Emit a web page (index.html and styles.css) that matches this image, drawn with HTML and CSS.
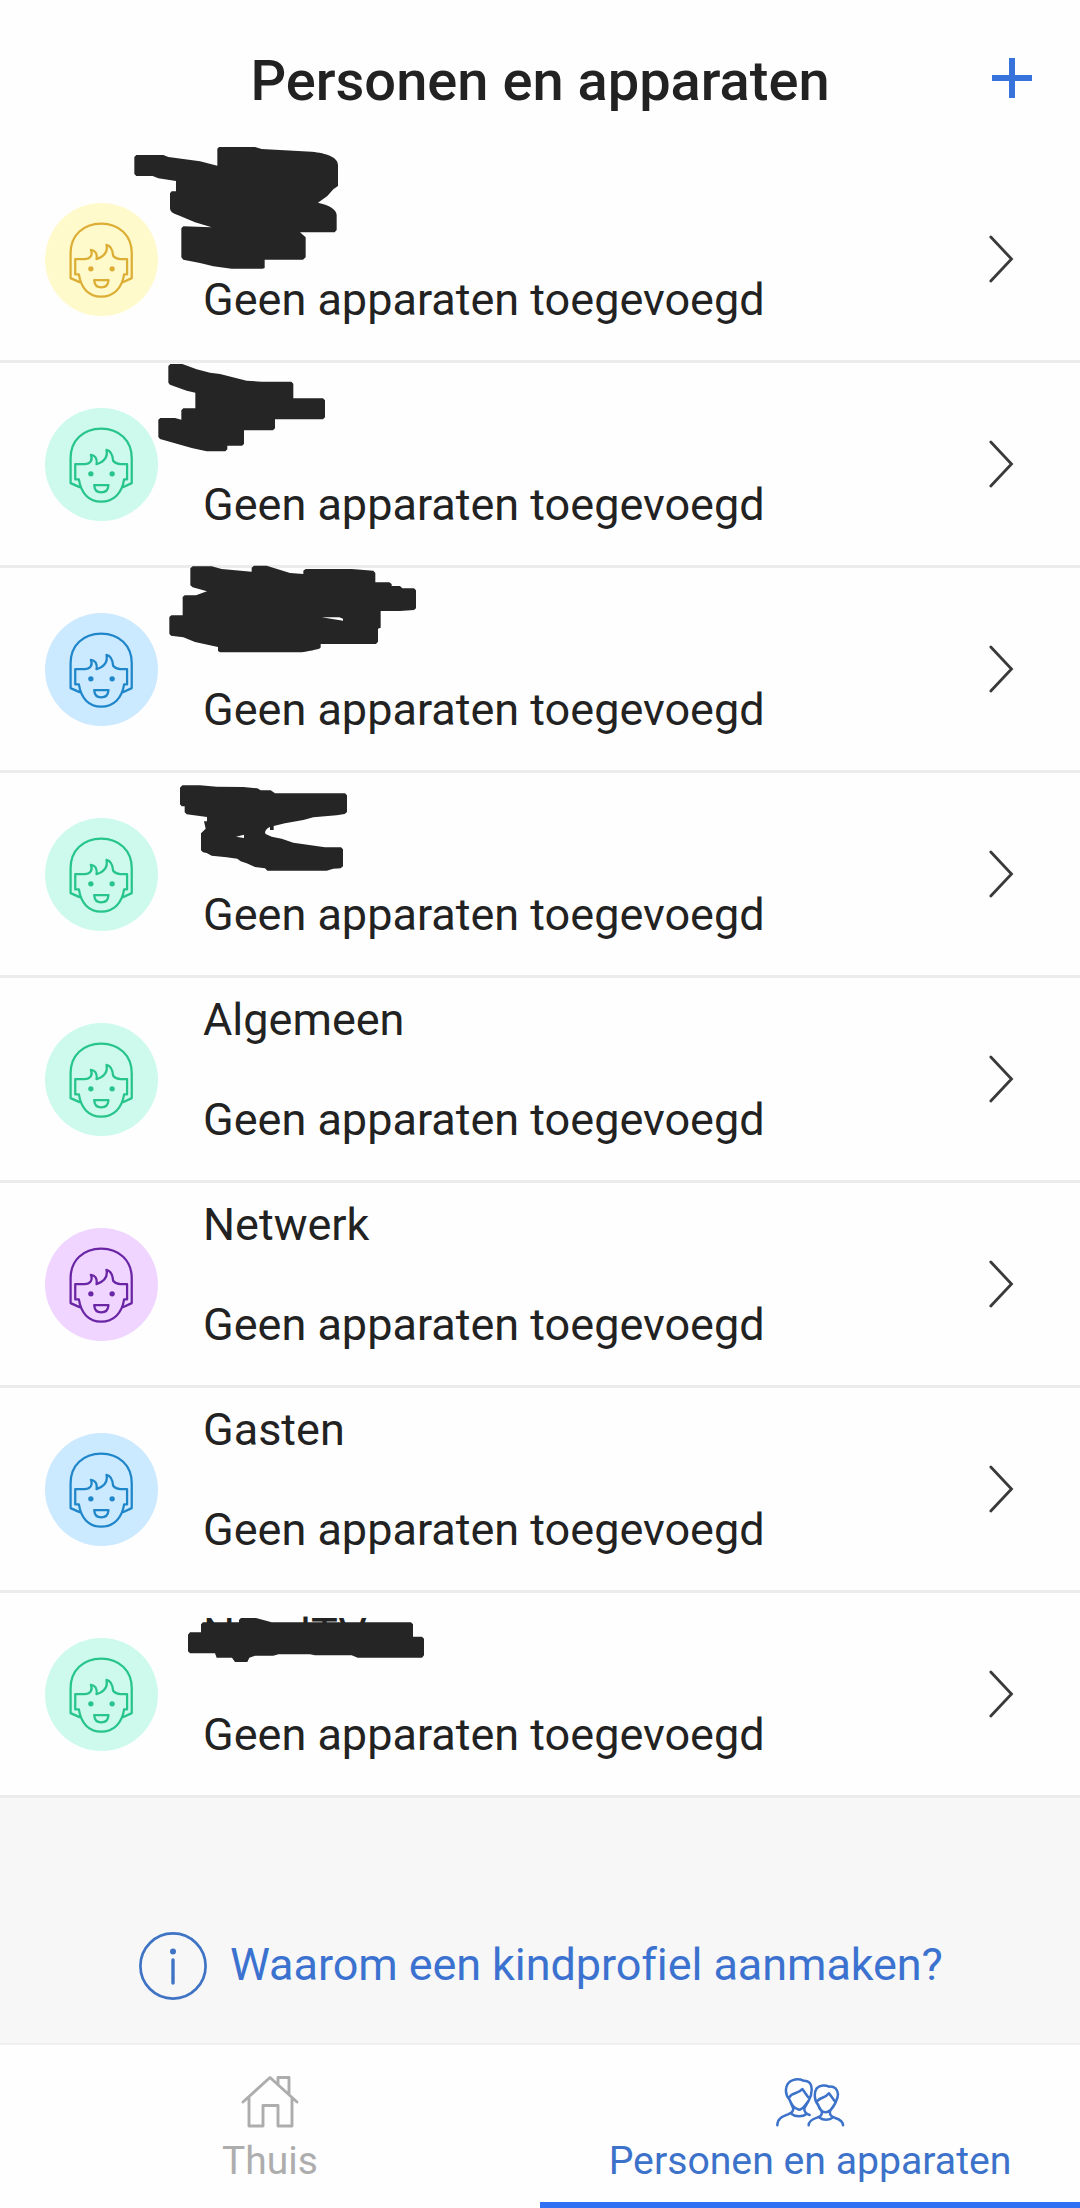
FILE: index.html
```html
<!DOCTYPE html>
<html lang="nl">
<head>
<meta charset="utf-8">
<title>Personen en apparaten</title>
<link rel="stylesheet" href="styles.css">
</head>
<body>
<svg class="defs" aria-hidden="true">
  <symbol id="face" viewBox="45 39 340 340">
    <g fill="none" stroke="currentColor" stroke-width="6.8" stroke-linejoin="round" stroke-linecap="round">
      <path d="M149 277L122 265V190C122 137 160 101 214 101S306 137 306 190V265L281 277"/>
      <path d="M136 208H164C180 208 190 197 183 180C195 181 203 190 200 208C220 201 235 187 230 165C244 168 249 184 250 198C255 204 263 208 272 208H292V254H283C277 295 251 321 214 321S153 295 147 254H136Z"/>
      <path d="M193 271H236C235 285 227 293 214 293S194 285 193 271Z"/>
    </g>
    <circle cx="183" cy="237" r="8" fill="currentColor"/>
    <circle cx="247" cy="237" r="8" fill="currentColor"/>
  </symbol>
  <symbol id="chevron" viewBox="0 0 26 48">
    <path d="M2.8 2L23.5 24L2.8 46" fill="none" stroke="#3a3a3a" stroke-width="2.8" stroke-linecap="round"/>
  </symbol>
</svg>

<header class="header">
  <h1 class="title">Personen en apparaten</h1>
  <svg class="add" viewBox="0 0 40 40"><path d="M20 0V40M0 20H40" stroke="#3873dc" stroke-width="6"/></svg>
</header>

<main class="list">
  <section class="row">
    <span class="avatar yellow"><svg><use href="#face"/></svg></span>
    <div class="text"><p class="name"></p><p class="status">Geen apparaten toegevoegd</p></div>
    <svg class="chevron"><use href="#chevron"/></svg>
    <svg class="mark" viewBox="0 0 1080 205"><path transform="translate(120 -28) scale(.33333)" d="M49 75H130L145 81L240 94L292 107V56L297 51H405L425 57L575 65C620 69 654 82 654 105V168L640 178L622 198L594 218C625 225 650 237 650 255V300L644 307H540L557 322V382L549 389H434V414L428 416H335L280 409L240 399L190 389L184 382V295L190 289L275 292L225 277L175 256C157 250 150 244 150 234V190L155 184H168V153L115 145L98 138H49L43 132V81Z"/></svg>
  </section>
  <section class="row">
    <span class="avatar green"><svg><use href="#face"/></svg></span>
    <div class="text"><p class="name"></p><p class="status">Geen apparaten toegevoegd</p></div>
    <svg class="chevron"><use href="#chevron"/></svg>
    <svg class="mark" viewBox="0 0 1080 205"><path transform="translate(140 -13) scale(.33333)" d="M91 42H127L170 58L210 68L240 72L320 92L365 95H454L460 101V145H549L555 151V202L549 208H405V235L399 241H312V282L306 287H262V298L256 304H200L155 294L60 267L55 261V209L61 204H105L124 209V181L130 175H166V128L140 122L90 104L85 98V48Z"/></svg>
  </section>
  <section class="row">
    <span class="avatar blue"><svg><use href="#face"/></svg></span>
    <div class="text"><p class="name"></p><p class="status">Geen apparaten toegevoegd</p></div>
    <svg class="chevron"><use href="#chevron"/></svg>
    <svg class="mark" viewBox="0 0 1080 205"><path fill-rule="evenodd" transform="translate(150 -18) scale(.33333)" d="M128 49H185L215 57L305 65V53L312 47H350L420 69L460 72V62L467 57H605L670 62L676 69V97H718L725 102V108H750L757 115H792L798 121V175L792 180L750 183H692V233L684 236V275L678 282H512V292C512 298 485 302 455 307H210L204 303V291L135 276L100 262L63 257L58 251V201L64 196H98V141L104 136H138L171 124L128 112L121 106V55ZM515 202L568 202L579 206V212Z"/></svg>
  </section>
  <section class="row">
    <span class="avatar green"><svg><use href="#face"/></svg></span>
    <div class="text"><p class="name"></p><p class="status">Geen apparaten toegevoegd</p></div>
    <svg class="chevron"><use href="#chevron"/></svg>
    <svg class="mark" viewBox="0 0 1080 205"><path fill-rule="evenodd" transform="translate(160 -3) scale(.33333)" d="M67 46H120L170 50L250 51L292 55L302 61H332L345 70H555L561 76V126L554 132L530 136L460 142L430 150L375 160L341 168V180H330V171C318 175 312 187 317 192L335 200L365 206L400 218L495 232H543L549 238V289L542 295L520 296L500 302H322L315 295L285 291L260 280L242 274L232 266L200 262L155 257L140 249L129 247L123 241V190L137 176L132 154H141V141L80 133L74 127V109H65L60 103V53ZM228 200L252 194V204Z"/></svg>
  </section>
  <section class="row">
    <span class="avatar green"><svg><use href="#face"/></svg></span>
    <div class="text"><p class="name">Algemeen</p><p class="status">Geen apparaten toegevoegd</p></div>
    <svg class="chevron"><use href="#chevron"/></svg>
  </section>
  <section class="row">
    <span class="avatar purple"><svg><use href="#face"/></svg></span>
    <div class="text"><p class="name">Netwerk</p><p class="status">Geen apparaten toegevoegd</p></div>
    <svg class="chevron"><use href="#chevron"/></svg>
  </section>
  <section class="row">
    <span class="avatar blue"><svg><use href="#face"/></svg></span>
    <div class="text"><p class="name">Gasten</p><p class="status">Geen apparaten toegevoegd</p></div>
    <svg class="chevron"><use href="#chevron"/></svg>
  </section>
  <section class="row">
    <span class="avatar green"><svg><use href="#face"/></svg></span>
    <div class="text"><p class="name partial"><span>N</span><span>lTV</span></p><p class="status">Geen apparaten toegevoegd</p></div>
    <svg class="chevron"><use href="#chevron"/></svg>
    <svg class="mark" viewBox="0 0 1080 205"><path transform="translate(170 -3) scale(.33333)" d="M93 103L99 97H207V90L213 84H258L305 97H723L729 103V140H756L762 146V196L756 203H563L545 196H435L420 193H325L310 197H255L238 203L232 216H195L186 203H140L135 190H60L54 184V134L60 127H93Z"/></svg>
  </section>
</main>

<a class="info">
  <svg class="info-icon" viewBox="0 0 68 68"><circle cx="34" cy="34" r="32.6" fill="none" stroke="#3f74c4" stroke-width="2.7"/><circle cx="34" cy="19.5" r="3" fill="#3f74c4"/><path d="M34 28V51" stroke="#3f74c4" stroke-width="3.4" stroke-linecap="round"/></svg>
  <span class="info-text">Waarom een kindprofiel aanmaken?</span>
</a>

<nav class="nav">
  <a class="tab">
    <svg class="home" viewBox="0 0 60 54" fill="none" stroke="currentColor" stroke-width="2.9" stroke-linecap="round" stroke-linejoin="round"><path d="M3 28L30 3.5L57 28M9 24V52H23V31.5H38V52H52V24M38 10V3.5H49V20"/></svg>
    <span class="tab-text thuis">Thuis</span>
  </a>
  <a class="tab active">
    <svg class="people" viewBox="105 110 210 150" fill="none" stroke="currentColor" stroke-width="7.5" stroke-linecap="round" stroke-linejoin="round"><path d="M112 255C112 234 127 229 144 222C155 217 159 215 160 205L148 177C138 166 137 150 139 141C143 119 171 112 190 121C209 120 216 134 215 149C215 162 211 172 206 181L193 204C192 215 199 221 209 224M150 169C153 158 176 160 187 146L204 170M148 177C154 190 160 205 177 208C191 207 198 190 206 181M155 221C166 230 188 230 200 221M206 255C206 242 216 237 231 232C242 228 247 225 245 213L233 192C221 178 223 154 230 144C240 133 257 134 267 139C284 136 293 149 294 161C294 174 289 181 285 190L270 212C268 225 274 228 286 233C301 238 309 243 309 255M230 185C237 171 256 174 267 159L286 185M234 192C238 207 247 216 258 216C271 214 279 202 285 190M239 232C249 240 269 240 278 232"/></svg>
    <span class="tab-text personen">Personen en apparaten</span>
  </a>
</nav>
</body>
</html>
```
FILE: styles.css
```css
* { box-sizing: border-box; }
body {
  margin: 0;
  width: 1080px;
  height: 2208px;
  display: flex;
  flex-direction: column;
  overflow: hidden;
  background: #fefefe;
  color: #222;
  font-family: Roboto, sans-serif;
}
.defs { display: none; }
.header {
  height: 158px;
  flex: none;
  display: grid;
  grid-template-columns: 88px 1fr 88px;
  align-items: start;
}
.title {
  grid-column: 2;
  margin: 48px 0 0;
  text-align: center;
  font-size: 56px;
  line-height: 66px;
  font-weight: 500;
  white-space: nowrap;
}
.add { width: 40px; height: 40px; margin-top: 58px; }
.list { flex: none; }
.row {
  position: relative;
  height: 205px;
  display: flex;
  align-items: center;
  padding: 0 66px 0 45px;
  border-bottom: 3px solid #ececec;
}
.avatar { width: 113px; height: 113px; border-radius: 50%; flex: none; }
.avatar svg { display: block; width: 113px; height: 113px; }
.yellow { background: #fffacb; color: #dcae35; }
.green { background: #cdfaec; color: #27c48c; }
.blue { background: #cbe9ff; color: #1f86c9; }
.purple { background: #efd5ff; color: #6a25a5; }
.text {
  flex: 1;
  align-self: stretch;
  margin-left: 45px;
  padding-top: 15px;
}
.name, .status {
  margin: 0;
  height: 54px;
  line-height: 54px;
  font-size: 45px;
  white-space: nowrap;
}
.status { margin-top: 46px; }
.partial { display: flex; gap: 65px; }
.chevron { width: 26px; height: 48px; flex: none; }
.mark {
  position: absolute;
  left: 0;
  top: 0;
  width: 1080px;
  height: 205px;
  overflow: visible;
  fill: #252525;
}
.info {
  flex: 1;
  display: flex;
  gap: 23px;
  padding: 134px 0 0 139px;
  background: #f7f7f7;
  color: #3c72cf;
}
.info-icon { width: 68px; height: 68px; flex: none; }
.info-text {
  height: 54px;
  line-height: 54px;
  margin-top: 6px;
  font-size: 45px;
  letter-spacing: -0.08px;
  white-space: nowrap;
}
.nav {
  flex: none;
  height: 165px;
  display: grid;
  grid-template-columns: 1fr 1fr;
  border-top: 2px solid #efefef;
}
.tab {
  display: flex;
  flex-direction: column;
  align-items: center;
  color: #adadad;
}
.active { color: #3c72c9; border-bottom: 6px solid #3070f3; }
.home { width: 60px; height: 54px; margin-top: 29px; }
.people { width: 70px; height: 50px; margin-top: 32px; }
.tab-text { line-height: 46px; font-size: 39px; white-space: nowrap; }
.thuis { margin-top: 10px; }
.personen { margin-top: 11px; font-size: 39.2px; }
```
